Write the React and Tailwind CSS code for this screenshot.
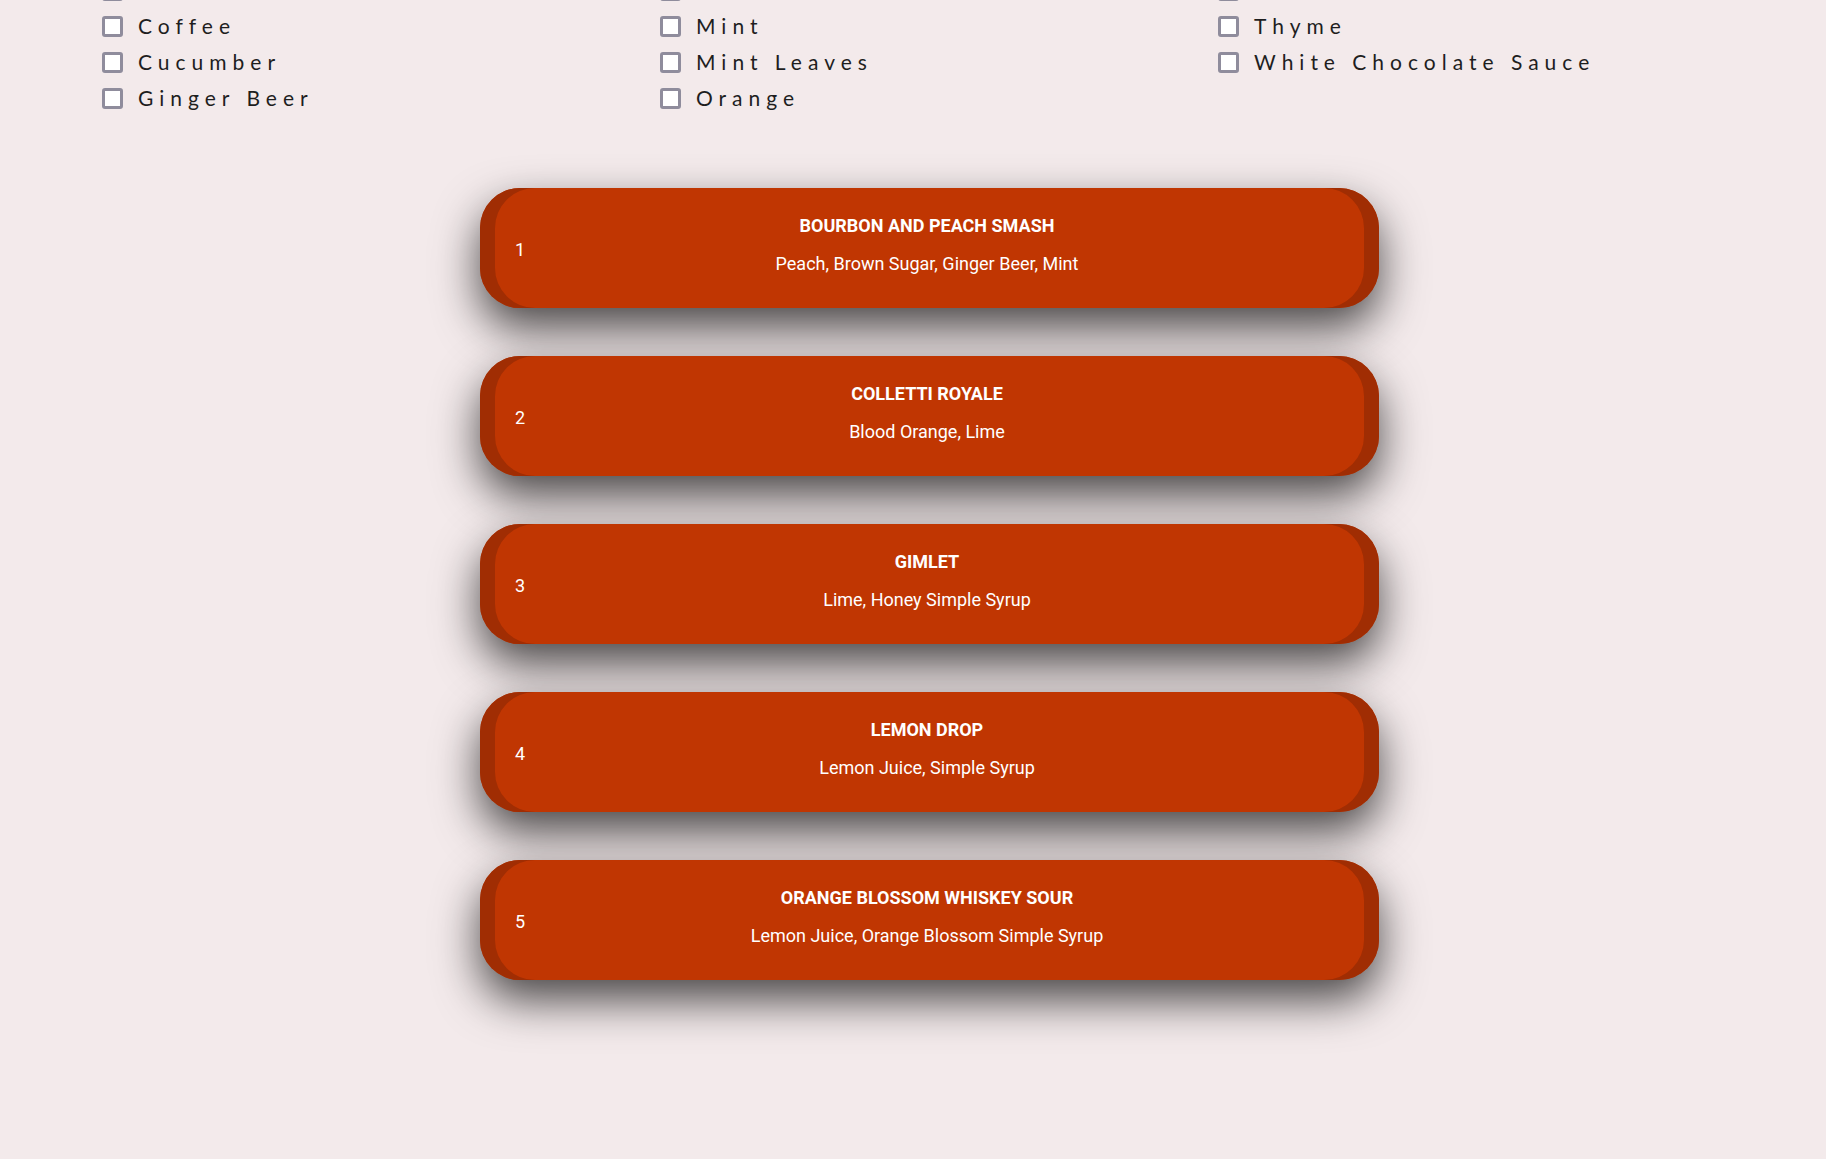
import React from "react";

const hidden = ["Cinnamon", "Lime", "Thai Basil"];

const cols = [
  ["Coffee", "Cucumber", "Ginger Beer"],
  ["Mint", "Mint Leaves", "Orange"],
  ["Thyme", "White Chocolate Sauce"],
];

const drinks = [
  ["BOURBON AND PEACH SMASH", "Peach, Brown Sugar, Ginger Beer, Mint"],
  ["COLLETTI ROYALE", "Blood Orange, Lime"],
  ["GIMLET", "Lime, Honey Simple Syrup"],
  ["LEMON DROP", "Lemon Juice, Simple Syrup"],
  ["ORANGE BLOSSOM WHISKEY SOUR", "Lemon Juice, Orange Blossom Simple Syrup"],
];

function Check({ label, tight }) {
  return (
    <label className="flex items-center h-[36px]">
      <span className="w-[21px] h-[21px] border-[3px] border-[#8f8c9c] rounded-[3px] bg-white shrink-0"></span>
      <span
        className={
          "ml-[15px] text-[21px] tracking-[6px] text-[#1e1e1e] font-['Lato','Open_Sans',sans-serif] " +
          (tight ? "leading-[14px] mb-[22px]" : "leading-[36px]")
        }
      >
        {label}
      </span>
    </label>
  );
}

export default function App() {
  return (
    <div className="min-h-screen bg-[#f3eaeb] overflow-hidden">
      <div className="grid grid-cols-[558px_558px_558px] pl-[102px] mt-[-28px]">
        {cols.map((c, i) => (
          <div key={i} className="flex flex-col">
            <Check label={hidden[i]} tight />
            {c.map((l) => (
              <Check key={l} label={l} />
            ))}
          </div>
        ))}
      </div>
      <div className="ml-[480px] mt-[72px] w-[899px] flex flex-col gap-[48px] font-['Roboto',sans-serif] text-white">
        {drinks.map(([t, s], i) => (
          <div
            key={t}
            className="h-[120px] rounded-[40px] bg-[#c03602] grid grid-cols-[72px_1fr_77px] items-center shadow-[inset_15px_0_0_#a02d03,inset_-15px_0_0_#a02d03,0_20px_45px_rgba(0,0,0,0.7)]"
          >
            <div className="pl-[35px] text-[18px] mt-[2px]">{i + 1}</div>
            <div className="flex flex-col items-center mt-[-7px]">
              <div className="text-[18px] font-bold leading-[20px]">{t}</div>
              <div className="text-[18px] leading-[20px] mt-[18px]">{s}</div>
            </div>
            <div></div>
          </div>
        ))}
      </div>
    </div>
  );
}
